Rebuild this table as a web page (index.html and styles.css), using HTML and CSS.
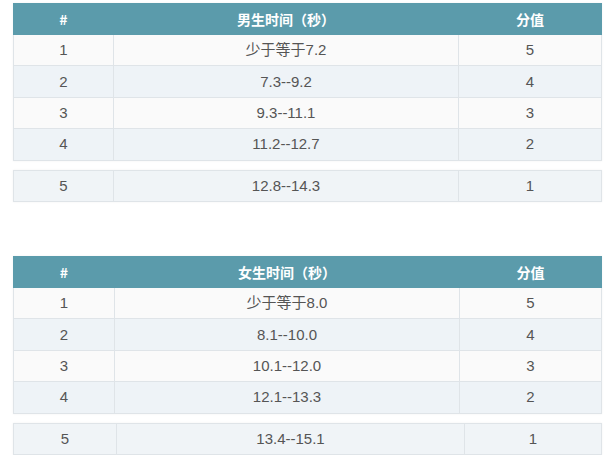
FILE: index.html
```html
<!DOCTYPE html>
<html lang="zh">
<head>
<meta charset="utf-8">
<link rel="stylesheet" href="styles.css">
</head>
<body>
<div class="page">
  <section class="group">
    <table class="grid">
      <colgroup><col class="c1"><col class="c2"><col class="c3"></colgroup>
      <thead><tr><th>#</th><th>男生时间（秒）</th><th>分值</th></tr></thead>
      <tbody>
        <tr><td>1</td><td>少于等于7.2</td><td>5</td></tr>
        <tr><td>2</td><td>7.3--9.2</td><td>4</td></tr>
        <tr><td>3</td><td>9.3--11.1</td><td>3</td></tr>
        <tr><td>4</td><td>11.2--12.7</td><td>2</td></tr>
      </tbody>
    </table>
    <table class="grid extra">
      <colgroup><col class="c1"><col class="c2"><col class="c3"></colgroup>
      <tbody>
        <tr><td>5</td><td>12.8--14.3</td><td>1</td></tr>
      </tbody>
    </table>
  </section>
  <section class="group second">
    <table class="grid">
      <colgroup><col class="c1b"><col class="c2"><col class="c3b"></colgroup>
      <thead><tr><th>#</th><th>女生时间（秒）</th><th>分值</th></tr></thead>
      <tbody>
        <tr><td>1</td><td>少于等于8.0</td><td>5</td></tr>
        <tr><td>2</td><td>8.1--10.0</td><td>4</td></tr>
        <tr><td>3</td><td>10.1--12.0</td><td>3</td></tr>
        <tr><td>4</td><td>12.1--13.3</td><td>2</td></tr>
      </tbody>
    </table>
    <table class="grid extra">
      <colgroup><col class="c1c"><col class="c2c"><col class="c3c"></colgroup>
      <tbody>
        <tr><td>5</td><td>13.4--15.1</td><td>1</td></tr>
      </tbody>
    </table>
  </section>
</div>
</body>
</html>
```
FILE: styles.css
```css
html, body {
  margin: 0;
  padding: 0;
  background: #ffffff;
}
.page {
  padding: 3px 3px 0 13px;
  font-family: "Liberation Sans", "Noto Sans CJK SC", sans-serif;
  font-size: 15px;
  color: #555555;
}
.group {
  display: flex;
  flex-direction: column;
  gap: 9px;
}
.group.second {
  margin-top: 54px;
}
.grid {
  width: 588px;
  border-collapse: collapse;
  table-layout: fixed;
  box-shadow: 0 0 2px rgba(0, 0, 0, 0.06);
}
.c1 { width: 100px; }
.c2 { width: 345px; }
.c3 { width: 143px; }
.c1b { width: 101px; }
.c3b { width: 142px; }
.c1c { width: 103px; }
.c2c { width: 348px; }
.c3c { width: 137px; }
.grid th {
  height: 30px;
  padding: 0;
  line-height: 18px;
  background: #5b9bab;
  color: #ffffff;
  font-size: 14px;
  font-weight: bold;
  font-family: "Noto Sans CJK SC", "Liberation Sans", sans-serif;
  border: 1px solid #5b9bab;
  border-left-color: #8fc0cc;
  text-align: center;
}
.grid th:first-child {
  border-left-color: #5b9bab;
}
.grid td {
  height: 30.4px;
  padding: 0;
  line-height: 18px;
  text-align: center;
  border: 1px solid #dfe4e8;
  background: #fafafa;
}
.grid tbody tr:nth-child(even) td {
  background: #eef3f7;
}
.grid.extra td {
  background: #f0f4f7;
}
```
